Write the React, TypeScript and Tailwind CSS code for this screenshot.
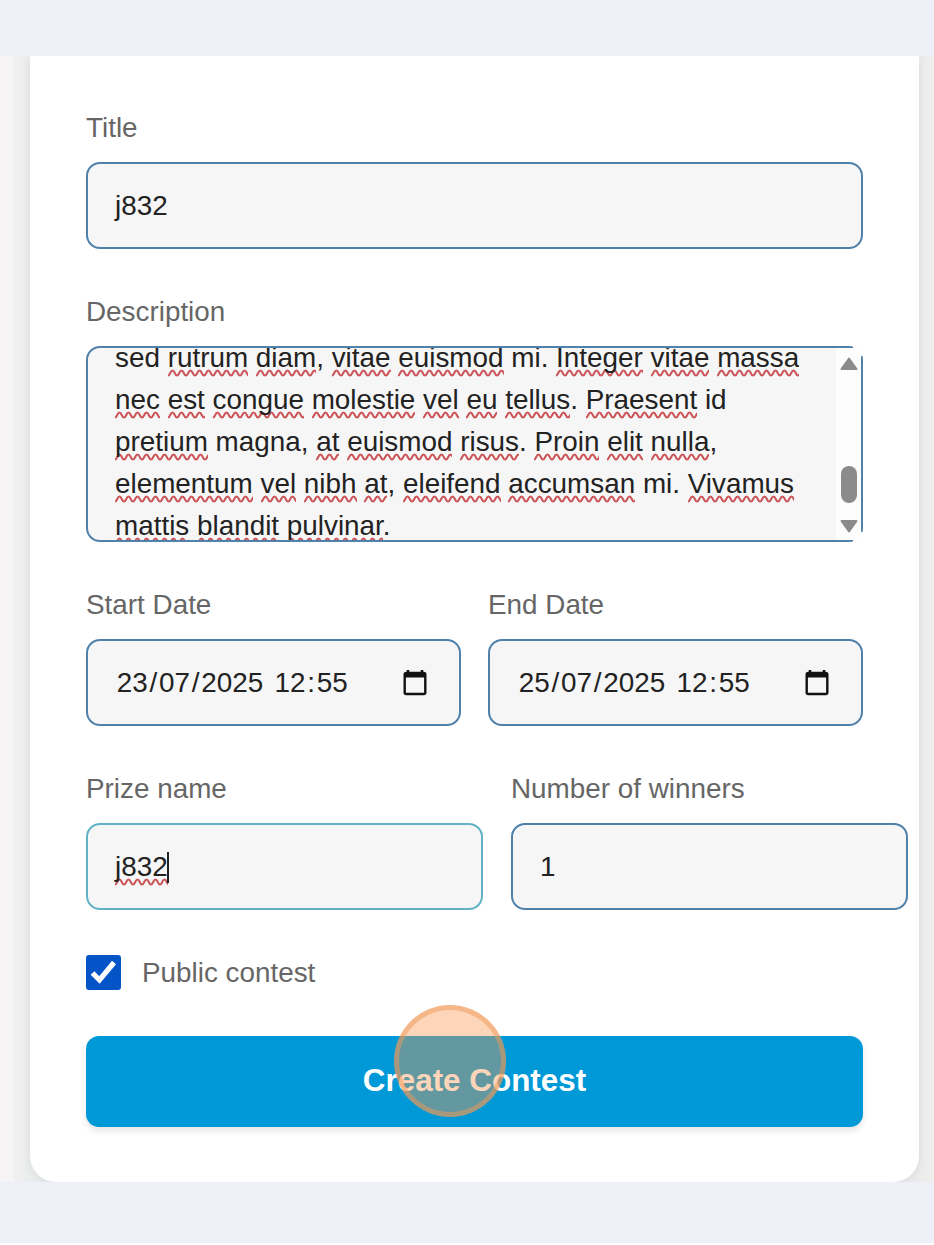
import type { ReactNode } from 'react';

function Sp({ children }: { children: ReactNode }) {
  return (
    <span className="pb-[4px] bg-repeat-x bg-[position:0_100%] bg-[size:9px_8px] bg-[url('data:image/svg+xml,%3Csvg%20xmlns=%22http://www.w3.org/2000/svg%22%20width=%229%22%20height=%228%22%3E%3Cpath%20d=%22M-2.25%204Q0%209%202.25%204T6.75%204T11.25%204%22%20fill=%22none%22%20stroke=%22%23cb5558%22%20stroke-width=%222.1%22/%3E%3C/svg%3E')]">
      {children}
    </span>
  );
}

function Label({ children }: { children: ReactNode }) {
  return <div className="h-[42px] leading-[42px] text-[#666666] whitespace-nowrap">{children}</div>;
}

const box = 'flex h-[87px] items-center rounded-[14px] border-2 bg-[#f6f6f6] pt-px text-[#222222]';

function CalendarIcon() {
  return (
    <svg width="24" height="28" viewBox="0 0 24 28" fill="none">
      <path d="M5 1v4M19 1v4" stroke="#111" strokeWidth="2.6" />
      <rect x="1.7" y="4" width="20.6" height="21" rx="1.5" stroke="#111" strokeWidth="2.4" />
      <path d="M1.5 4h21v4.500h-21z" fill="#111" />
    </svg>
  );
}

function DateField({ parts }: { parts: string[] }) {
  const [d, m, y, h, min] = parts;
  return (
    <div className={`${box} border-[#4f81ab] justify-between pl-[27px] pr-[32px]`}>
      <div className="flex whitespace-pre">
        <span className="px-[1.75px]">{d}</span>/<span className="px-[1.75px]">{m}</span>/
        <span className="px-[1.75px]">{y}</span>
        <span> </span>
        <span className="px-[1.75px]">{h}</span>:<span className="px-[1.75px]">{min}</span>
      </div>
      <CalendarIcon />
    </div>
  );
}

export default function App() {
  return (
    <div className="flex h-[1245px] w-[934px] flex-col overflow-hidden bg-white font-['Liberation_Sans',Arial,sans-serif] text-[27.85px]">
      <div className="h-[56px] shrink-0 bg-[#edf1f7]" />
      <div className="h-[1126px] shrink-0 overflow-hidden bg-[linear-gradient(90deg,#f7f4f6_0px,#f6f4f5_12px,#eff0ef_15px,#ebecec_29px,#ebebeb_918px,#efefee_934px)] pl-[30px]">
        <main className="h-full w-[889px] rounded-b-[26px] bg-white pl-[56px] pt-[51px] shadow-[0_2px_8px_rgba(0,0,0,0.07)]">
          <Label>Title</Label>
          <div className={`${box} mt-[13px] w-[777px] border-[#4f81ab] pl-[27px]`}>j832</div>

          <div className="mt-[42px]">
            <Label>Description</Label>
          </div>
          <div className="relative mt-[13px] flex h-[196px] w-[777px] rounded-[14px] border-2 border-[#4f81ab] bg-[#f6f6f6] pl-[27px] text-[#222222]">
            <div className="h-full overflow-hidden">
              <div className="-mt-[11px] whitespace-nowrap leading-[42px]">
                <div>sed <Sp>rutrum</Sp> <Sp>diam</Sp>, <Sp>vitae</Sp> <Sp>euismod</Sp> mi. <Sp>Integer</Sp> <Sp>vitae</Sp> <Sp>massa</Sp></div>
                <div><Sp>nec</Sp> <Sp>est</Sp> <Sp>congue</Sp> <Sp>molestie</Sp> <Sp>vel</Sp> <Sp>eu</Sp> <Sp>tellus</Sp>. <Sp>Praesent</Sp> id</div>
                <div><Sp>pretium</Sp> magna, <Sp>at</Sp> <Sp>euismod</Sp> <Sp>risus</Sp>. <Sp>Proin</Sp> <Sp>elit</Sp> <Sp>nulla</Sp>,</div>
                <div><Sp>elementum</Sp> <Sp>vel</Sp> <Sp>nibh</Sp> <Sp>at</Sp>, <Sp>eleifend</Sp> <Sp>accumsan</Sp> mi. <Sp>Vivamus</Sp></div>
                <div><Sp>mattis</Sp> <Sp>blandit</Sp> <Sp>pulvinar</Sp>.</div>
              </div>
            </div>
            <div className="ml-auto flex w-[25px] shrink-0 flex-col items-center bg-[#fdfdfd]">
              <svg className="mt-[9px]" width="18" height="14" viewBox="0 0 18 14">
                <path d="M9 1.5L16.500 12H1.500Z" fill="#8b8b8b" stroke="#8b8b8b" strokeWidth="2" strokeLinejoin="round" />
              </svg>
              <div className="mt-[95px] h-[37px] w-[16px] rounded-full bg-[#8b8b8b]" />
              <svg className="mt-[16px]" width="18" height="14" viewBox="0 0 18 14">
                <path d="M9 12.500L16.500 2H1.500Z" fill="#8b8b8b" stroke="#8b8b8b" strokeWidth="2" strokeLinejoin="round" />
              </svg>
            </div>
            <div className="absolute -right-[2px] -top-[2px] h-[10px] w-[10px] bg-[#fefefe]" />
            <div className="absolute -bottom-[2px] -right-[2px] h-[10px] w-[10px] bg-[#fefefe]" />
          </div>

          <div className="mt-[42px] grid w-[777px] grid-cols-[375px_375px] gap-x-[27px]">
            <div className="flex flex-col gap-[13px]">
              <Label>Start Date</Label>
              <DateField parts={['23', '07', '2025', '12', '55']} />
            </div>
            <div className="flex flex-col gap-[13px]">
              <Label>End Date</Label>
              <DateField parts={['25', '07', '2025', '12', '55']} />
            </div>
          </div>

          <div className="mt-[42px] flex w-[822px] gap-[28px]">
            <div className="flex w-[397px] flex-col gap-[13px]">
              <Label>Prize name</Label>
              <div className={`${box} border-[#62b2c6] pl-[27px]`}>
                <div className="whitespace-nowrap leading-[42px]"><Sp>j832</Sp></div>
                <span className="-ml-px h-[31px] w-[2px] bg-[#222222]" />
              </div>
            </div>
            <div className="flex w-[397px] flex-col gap-[13px]">
              <Label>Number of winners</Label>
              <div className={`${box} border-[#4f81ab] pl-[27px]`}>1</div>
            </div>
          </div>

          <div className="mt-[41px] flex h-[42px] items-center gap-[21px] text-[#666666]">
            <svg width="35" height="35" viewBox="0 0 35 35">
              <rect width="35" height="35" rx="3" fill="#0454c8" />
              <path d="M6.500 18L13.500 25L28 7.500" fill="none" stroke="#fff" strokeWidth="5.200" />
            </svg>
            <span className="pt-[2px]">Public contest</span>
          </div>

          <div className="relative mt-[43px] flex h-[91px] w-[777px] items-center justify-center rounded-[13px] bg-[#0099d8] pb-[2px] text-[31.4px] font-bold text-white shadow-[0_4px_6px_rgba(0,0,0,0.1)]">
            Create Contest
            <div className="absolute left-[308px] top-[-31px] h-[112px] w-[112px] rounded-full border-[5px] border-[#ee9a58]/50 bg-[#f9954f]/40" />
          </div>
        </main>
      </div>
      <div className="h-[61px] shrink-0 bg-[#edf1f7]" />
    </div>
  );
}
